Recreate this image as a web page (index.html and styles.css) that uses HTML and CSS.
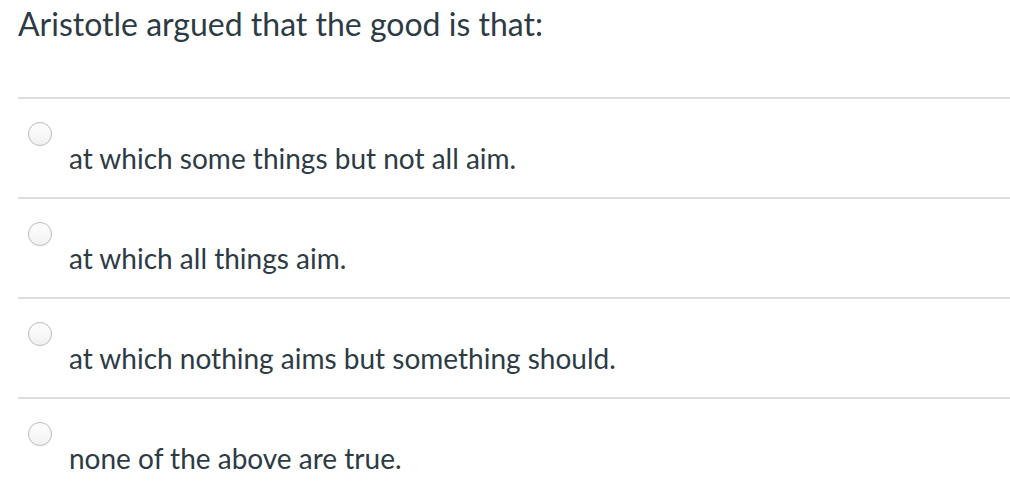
FILE: index.html
```html
<html lang="en">

<head>
    <title>Quiz question</title>
    <link rel="stylesheet" href="styles.css">
</head>

<body>
    <div class="question">
        <h1 class="question-text">Aristotle argued that the good is that:</h1>
        <div class="answers">
            <label class="answer">
                <input type="radio" name="q1" />
                <span class="answer-text">at which some things but not all aim.</span>
            </label>
            <label class="answer">
                <input type="radio" name="q1" />
                <span class="answer-text">at which all things aim.</span>
            </label>
            <label class="answer">
                <input type="radio" name="q1" />
                <span class="answer-text">at which nothing aims but something should.</span>
            </label>
            <label class="answer">
                <input type="radio" name="q1" />
                <span class="answer-text">none of the above are true.</span>
            </label>
        </div>
    </div>
</body>
</html>
```

FILE: styles.css
```css
html,
body {
    padding: 0;
    margin: 0;
}

* {
    box-sizing: border-box;
}

body {
    font-family: Lato, "Noto Sans", sans-serif;
    color: #2d3b45;
    background-color: #fff;
}

.question {
    padding-left: 18px;
}

.question-text {
    margin: 0;
    padding-top: 5px;
    height: 97px;
    font-size: 32px;
    font-weight: normal;
    line-height: 1.2;
}

.answer {
    display: flex;
    flex-direction: column;
    align-items: flex-start;
    height: 100px;
    padding: 23px 0 0 10px;
    border-top: 2px solid #dddddd;
    cursor: pointer;
}

.answer input {
    appearance: none;
    width: 24px;
    height: 24px;
    margin: 0;
    border: 1px solid #bdbdbd;
    border-radius: 50%;
    background: linear-gradient(#ffffff, #f1f1f1);
    box-shadow: inset 0 1px 1px #ffffff, 0 0 1px #e0e0e0;
    cursor: pointer;
}

.answer-text {
    margin-left: 41px;
    font-size: 28px;
    line-height: 24px;
}
```
